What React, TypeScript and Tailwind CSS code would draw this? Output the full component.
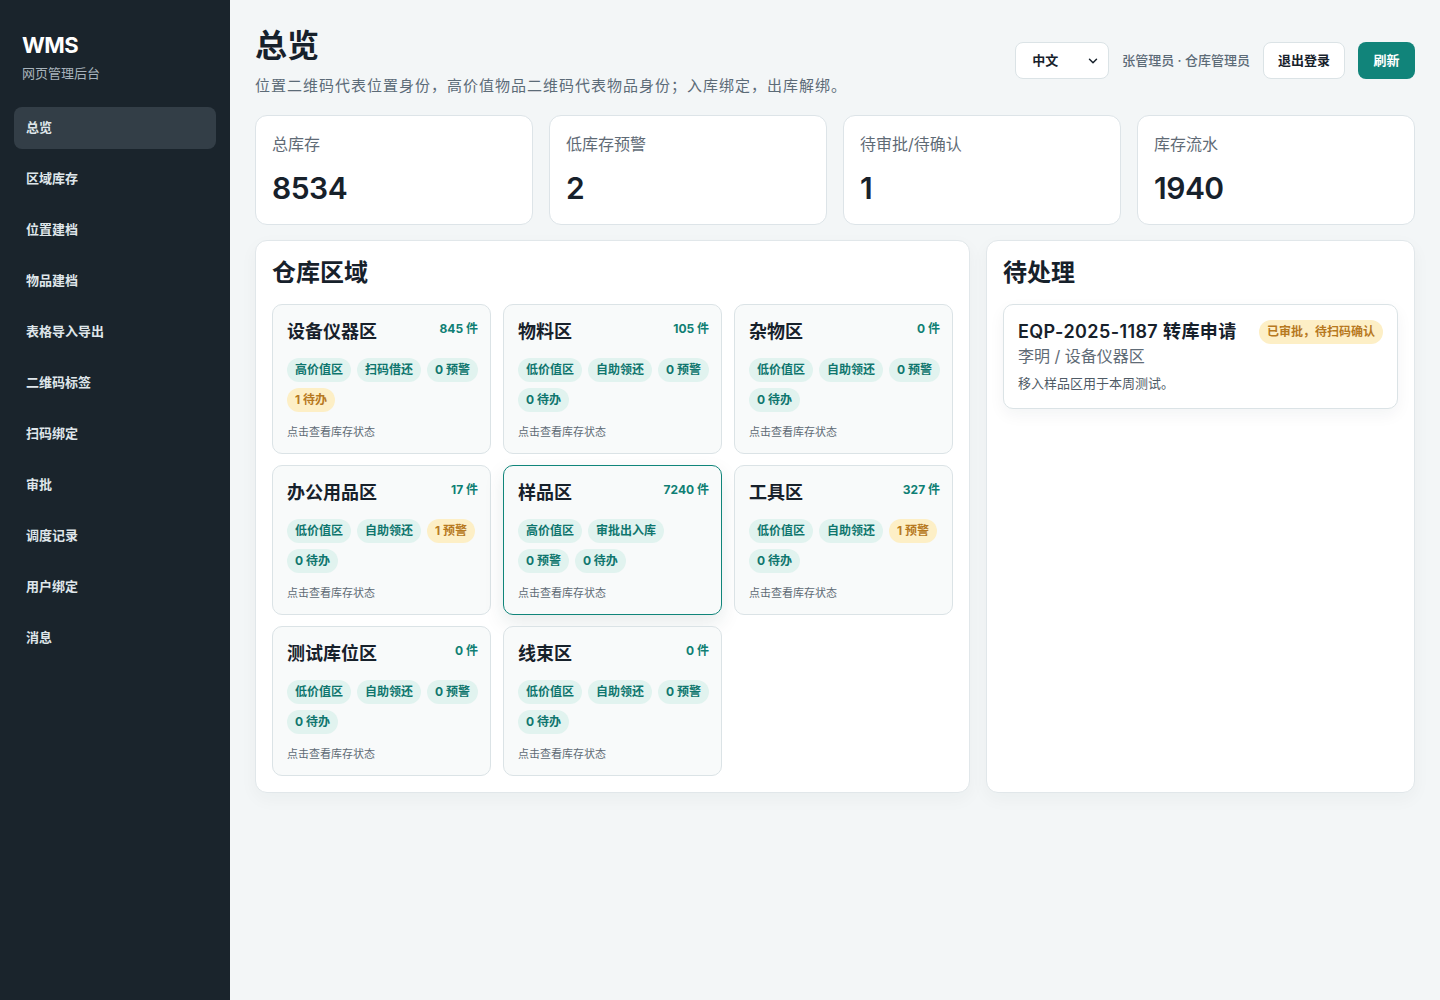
import { ChevronDown } from "lucide-react";

const navItems = ["总览", "区域库存", "位置建档", "物品建档", "表格导入导出", "二维码标签", "扫码绑定", "审批", "调度记录", "用户绑定", "消息"];

const stats = [
  { label: "总库存", value: "8534" },
  { label: "低库存预警", value: "2" },
  { label: "待审批/待确认", value: "1" },
  { label: "库存流水", value: "1940" },
];

type Zone = {
  name: string;
  count: number;
  tags: string[];
  warn: number;
  todo: number;
  active?: boolean;
};

const zones: Zone[] = [
  { name: "设备仪器区", count: 845, tags: ["高价值区", "扫码借还"], warn: 0, todo: 1 },
  { name: "物料区", count: 105, tags: ["低价值区", "自助领还"], warn: 0, todo: 0 },
  { name: "杂物区", count: 0, tags: ["低价值区", "自助领还"], warn: 0, todo: 0 },
  { name: "办公用品区", count: 17, tags: ["低价值区", "自助领还"], warn: 1, todo: 0 },
  { name: "样品区", count: 7240, tags: ["高价值区", "审批出入库"], warn: 0, todo: 0, active: true },
  { name: "工具区", count: 327, tags: ["低价值区", "自助领还"], warn: 1, todo: 0 },
  { name: "测试库位区", count: 0, tags: ["低价值区", "自助领还"], warn: 0, todo: 0 },
  { name: "线束区", count: 0, tags: ["低价值区", "自助领还"], warn: 0, todo: 0 },
];

function Tag({ children, tone = "teal" }: { children: React.ReactNode; tone?: "teal" | "amber" }) {
  return (
    <span
      className={`inline-flex h-[24px] items-center whitespace-pre rounded-full px-2 text-[12px] font-bold leading-none ${
        tone === "amber" ? "bg-[#fdefc6] text-[#b7791f]" : "bg-[#e1f3ef] text-[#0f766e]"
      }`}
    >
      {children}
    </span>
  );
}

function ZoneCard({ zone }: { zone: Zone }) {
  return (
    <div
      className={`h-[150px] rounded-[10px] border bg-[#f8fafa] pt-[13px] pl-[14px] pr-[12px] ${
        zone.active ? "border-[#10857a] shadow-[0_8px_20px_rgba(16,60,60,0.10)]" : "border-[#dbe3e6]"
      }`}
    >
      <div className="flex items-start justify-between">
        <p className="text-[18px] font-bold leading-7 text-[#17212b]">{zone.name}</p>
        <p className="mt-[3px] text-[12px] font-bold leading-4 text-[#0f7f74]">{zone.count} 件</p>
      </div>
      <div className="mt-3 flex flex-wrap gap-[6px]">
        {zone.tags.map((tag) => (
          <Tag key={tag}>{tag}</Tag>
        ))}
        <Tag tone={zone.warn > 0 ? "amber" : "teal"}>{zone.warn} 预警</Tag>
        <Tag tone={zone.todo > 0 ? "amber" : "teal"}>{zone.todo} 待办</Tag>
      </div>
      <p className="mt-3 text-[11px] leading-4 text-[#5f6b75]">点击查看库存状态</p>
    </div>
  );
}

export default function App() {
  return (
    <div
      className="flex min-h-screen bg-[#f3f6f7] text-[#17212b]"
      style={{ fontFamily: 'Inter, "Noto Sans CJK SC", "Noto Sans", sans-serif' }}
    >
      <aside className="w-[230px] shrink-0 bg-[#1a242c] px-[14px]">
        <div className="pl-[8px] pt-[31px]">
          <p className="text-[22px] font-bold leading-7 tracking-[-0.5px] text-white">WMS</p>
          <p className="mt-1 text-[13px] leading-5 text-[#a9b4bd]">网页管理后台</p>
        </div>
        <nav className="mt-[24px] flex flex-col gap-[9px]">
          {navItems.map((item, i) => (
            <div
              key={item}
              className={`flex h-[42px] items-center rounded-lg px-3 text-[13px] font-bold text-[#dfe6ea] ${
                i === 0 ? "bg-[#333e47]" : ""
              }`}
            >
              {item}
            </div>
          ))}
        </nav>
      </aside>

      <main className="flex-1 px-[25px] pt-[26px] pb-10">
        <header className="flex items-start justify-between">
          <div>
            <h1 className="text-[32px] font-bold leading-10 text-[#17212b]">总览</h1>
            <p className="mt-[8px] text-[15px] leading-6 tracking-[1px] text-[#5c6b77]">
              位置二维码代表位置身份，高价值物品二维码代表物品身份；入库绑定，出库解绑。
            </p>
          </div>
          <div className="mt-4 flex items-center gap-[13px]">
            <div className="flex h-[37px] w-[94px] items-center justify-between rounded-lg border border-[#dbe3e6] bg-white pl-4 pr-2 text-[13px] font-semibold text-[#17212b]">
              <span>中文</span>
              <ChevronDown size={14} strokeWidth={2.5} />
            </div>
            <span className="whitespace-pre text-[13px] font-medium text-[#5c6b77]">张管理员 · 仓库管理员</span>
            <button className="h-[37px] w-[82px] rounded-lg border border-[#dbe3e6] bg-white text-[13px] font-bold text-[#17212b]">
              退出登录
            </button>
            <button className="h-[37px] w-[57px] rounded-lg bg-[#11847a] text-[13px] font-bold text-white">刷新</button>
          </div>
        </header>

        <div className="mt-[17px] grid grid-cols-4 gap-4">
          {stats.map((stat) => (
            <div key={stat.label} className="h-[110px] rounded-xl border border-[#dde4e8] bg-white p-4">
              <p className="text-[16px] leading-6 text-[#5f6b76]">{stat.label}</p>
              <p className="mt-[14px] text-[30px] font-semibold leading-9 tracking-[-0.5px] text-[#17212b]">{stat.value}</p>
            </div>
          ))}
        </div>

        <div className="mt-[15px] grid grid-cols-[5fr_3fr] items-stretch gap-4">
          <section className="rounded-xl border border-[#e1e7ea] bg-white p-4 shadow-[0_6px_18px_rgba(20,40,50,0.04)]">
            <h2 className="text-[24px] font-bold leading-8">仓库区域</h2>
            <div className="mt-[15px] grid grid-cols-3 gap-x-3 gap-y-[11px]">
              {zones.map((zone) => (
                <ZoneCard key={zone.name} zone={zone} />
              ))}
            </div>
          </section>

          <section className="rounded-xl border border-[#e1e7ea] bg-white p-4 shadow-[0_6px_18px_rgba(20,40,50,0.04)]">
            <h2 className="text-[24px] font-bold leading-8">待处理</h2>
            <div className="mt-[15px] rounded-[10px] border border-[#dbe3e6] bg-white px-[14px] pt-[13px] pb-[15px] shadow-[0_6px_16px_rgba(20,40,50,0.05)]">
              <div className="flex items-center justify-between">
                <p className="text-[18px] font-semibold leading-7 tracking-[0.4px] text-[#17212b]">EQP-2025-1187 转库申请</p>
                <Tag tone="amber">已审批，待扫码确认</Tag>
              </div>
              <p className="-mt-[2px] text-[16px] leading-6 text-[#5f6b76]">李明 / 设备仪器区</p>
              <p className="mt-[5px] text-[13px] leading-5 text-[#4f5b66]">移入样品区用于本周测试。</p>
            </div>
          </section>
        </div>
      </main>
    </div>
  );
}
